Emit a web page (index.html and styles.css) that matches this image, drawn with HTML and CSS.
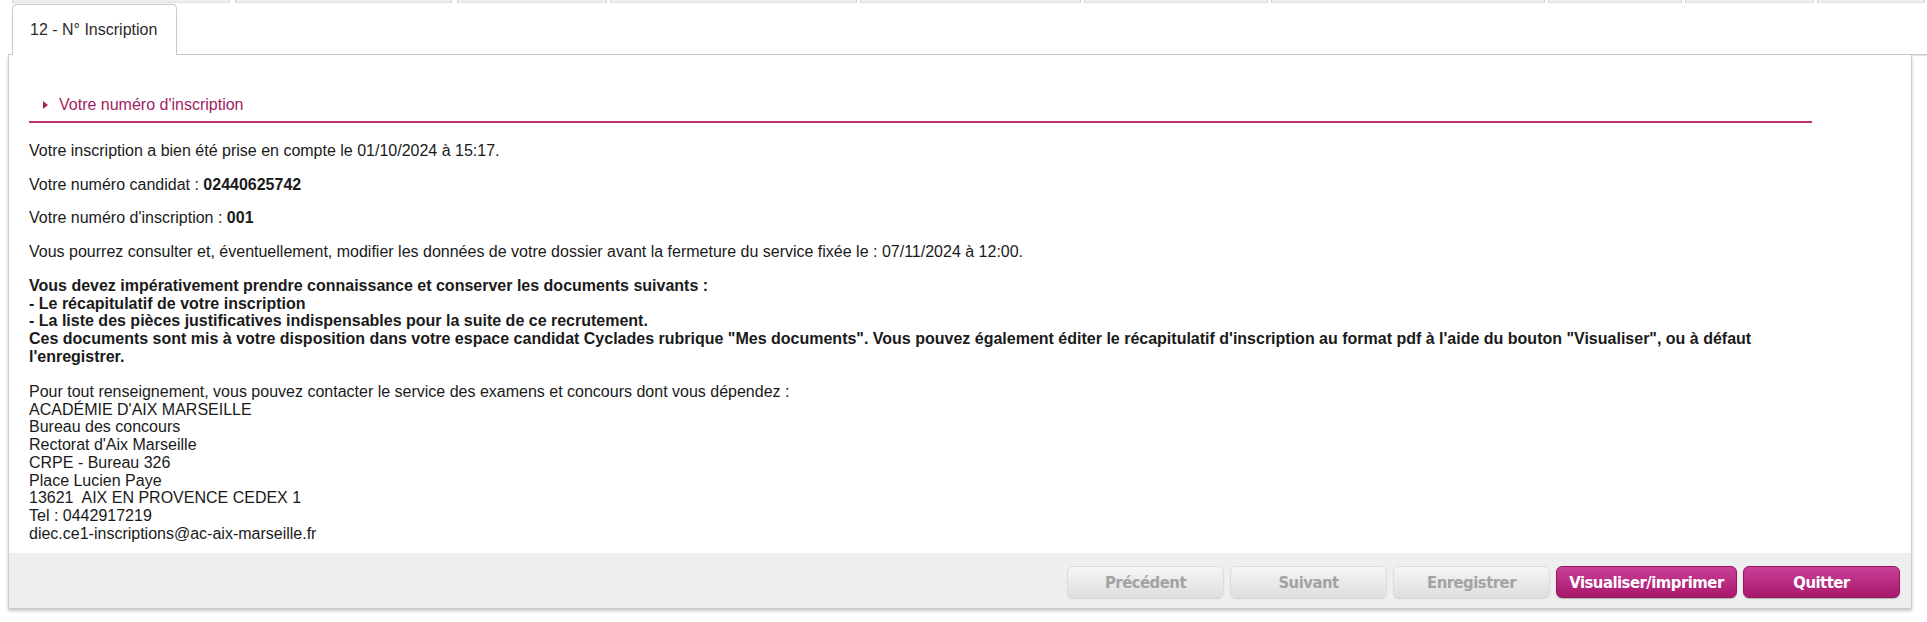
FILE: index.html
```html
<!DOCTYPE html>
<html lang="fr">
<head>
<meta charset="utf-8">
<title>12 - N° Inscription</title>
<link rel="stylesheet" href="styles.css">
</head>
<body>
<div class="tabs">
  <div class="tabrow-prev">
    <span class="ptab"></span><span class="ptab"></span><span class="ptab"></span><span class="ptab"></span><span class="ptab"></span><span class="ptab"></span><span class="ptab"></span><span class="ptab"></span><span class="ptab"></span><span class="ptab"></span>
  </div>
  <div class="tabrow">
    <div class="tab active">12 - N° Inscription</div>
  </div>
</div>
<div class="panel">
  <div class="content">
    <h2 class="section-title"><span class="arrow"></span>Votre numéro d'inscription</h2>
    <p class="first">Votre inscription a bien été prise en compte le 01/10/2024 à 15:17.</p>
    <p>Votre numéro candidat : <b>02440625742</b></p>
    <p>Votre numéro d'inscription : <b>001</b></p>
    <p>Vous pourrez consulter et, éventuellement, modifier les données de votre dossier avant la fermeture du service fixée le : 07/11/2024 à 12:00.</p>
    <div class="info">
      <b>Vous devez impérativement prendre connaissance et conserver les documents suivants :<br>
      - Le récapitulatif de votre inscription<br>
      - La liste des pièces justificatives indispensables pour la suite de ce recrutement.<br>
      Ces documents sont mis à votre disposition dans votre espace candidat Cyclades rubrique "Mes documents". Vous pouvez également éditer le récapitulatif d'inscription au format pdf à l'aide du bouton "Visualiser", ou à défaut<br>l'enregistrer.</b><br>
      <br>
      Pour tout renseignement, vous pouvez contacter le service des examens et concours dont vous dépendez :<br>
      ACADÉMIE D'AIX MARSEILLE<br>
      Bureau des concours<br>
      Rectorat d'Aix Marseille<br>
      CRPE - Bureau 326<br>
      Place Lucien Paye<br>
      13621&nbsp; AIX EN PROVENCE CEDEX 1<br>
      Tel : 0442917219<br>
      diec.ce1-inscriptions@ac-aix-marseille.fr
    </div>
  </div>
  <div class="footer">
    <button class="btn btn-off">Précédent</button>
    <button class="btn btn-off">Suivant</button>
    <button class="btn btn-off">Enregistrer</button>
    <button class="btn btn-on btn-wide">Visualiser/imprimer</button>
    <button class="btn btn-on">Quitter</button>
  </div>
</div>
</body>
</html>
```

FILE: styles.css
```css
html, body {
  margin: 0;
  padding: 0;
  background: #ffffff;
}
body {
  font-family: "Liberation Sans", Arial, sans-serif;
  font-size: 16px;
  color: #1a1a1a;
  width: 1927px;
  height: 622px;
  overflow: hidden;
}

/* tabs */
.tabs {
  margin-left: 8px;
  width: 1919px;
  border-bottom: 1px solid #c9c9c9;
  box-shadow: 0 1px 0 #e3e3e3;
}
.tabrow-prev {
  display: flex;
  gap: 3px;
  padding-left: 4px;
  height: 4px;
}
.ptab {
  height: 2px;
  background: #efefef;
  border-left: 1px solid #cfcfcf;
  border-right: 1px solid #cfcfcf;
  border-bottom: 1px solid #e2e2e2;
  box-sizing: content-box;
}
.ptab:nth-child(1) { width: 216px; margin-right: 2px; }
.ptab:nth-child(2) { width: 215px; margin-right: 2px; }
.ptab:nth-child(3) { width: 148px; }
.ptab:nth-child(4) { width: 245px; }
.ptab:nth-child(5) { width: 219px; }
.ptab:nth-child(6) { width: 182px; }
.ptab:nth-child(7) { width: 272px; }
.ptab:nth-child(8) { width: 132px; }
.ptab:nth-child(9) { width: 127px; }
.ptab:nth-child(10) { width: 106px; }

.tabrow {
  display: flex;
  padding-left: 4px;
}
.tab {
  border: 1px solid #c9c9c9;
  border-bottom: none;
  border-radius: 5px 5px 0 0;
  background: #ffffff;
  color: #2a2a2a;
  line-height: 18px;
  padding: 16px 17px 15px 17px;
  width: 129px;
  margin-bottom: -1px;
  height: 19px;
  position: relative;
  box-shadow: 0 -1px 1px rgba(0,0,0,0.04);
}

/* panel */
.panel {
  margin-left: 8px;
  width: 1902px;
  border: 1px solid #cccccc;
  border-top: none;
  box-shadow: 0 2px 3px rgba(0,0,0,0.22);
  background: #ffffff;
}
.content {
  padding: 41px 6px 11px 20px;
  line-height: 17.7px;
}
.section-title {
  margin: 0 93px 0 0;
  font-size: 16px;
  font-weight: normal;
  color: #a0245f;
  line-height: 18px;
  padding: 0 0 7px 14px;
  border-bottom: 2px solid #bf2f7b;
  display: flex;
  align-items: center;
}
.arrow {
  width: 0;
  height: 0;
  border-top: 4px solid transparent;
  border-bottom: 4px solid transparent;
  border-left: 5px solid #a0245f;
  margin-right: 11px;
}
.content p {
  margin: 16px 0;
}
.content p.first {
  margin-top: 19px;
}
.info {
  margin-top: 16px;
}

/* footer */
.footer {
  background: #efefef;
  display: flex;
  justify-content: flex-end;
  gap: 6px;
  padding: 13px 11px 10px 0;
}
.btn {
  width: 157px;
  height: 32px;
  border-radius: 6px;
  font-family: "DejaVu Sans Condensed", "DejaVu Sans", sans-serif;
  font-stretch: condensed;
  font-weight: bold;
  font-size: 16.5px;
  letter-spacing: -0.5px;
  padding: 0;
  cursor: pointer;
}
.btn-wide {
  width: 181px;
}
.btn-off {
  background: linear-gradient(#f6f6f6, #dedede);
  border: 1px solid #dcdcdc;
  color: #a3a3a3;
  box-shadow: 0 1px 1px rgba(0,0,0,0.12);
}
.btn-on {
  background: linear-gradient(#c9409a, #a9176a);
  border: 1px solid #95145c;
  color: #ffffff;
  box-shadow: 0 1px 1px rgba(0,0,0,0.25);
}
```
